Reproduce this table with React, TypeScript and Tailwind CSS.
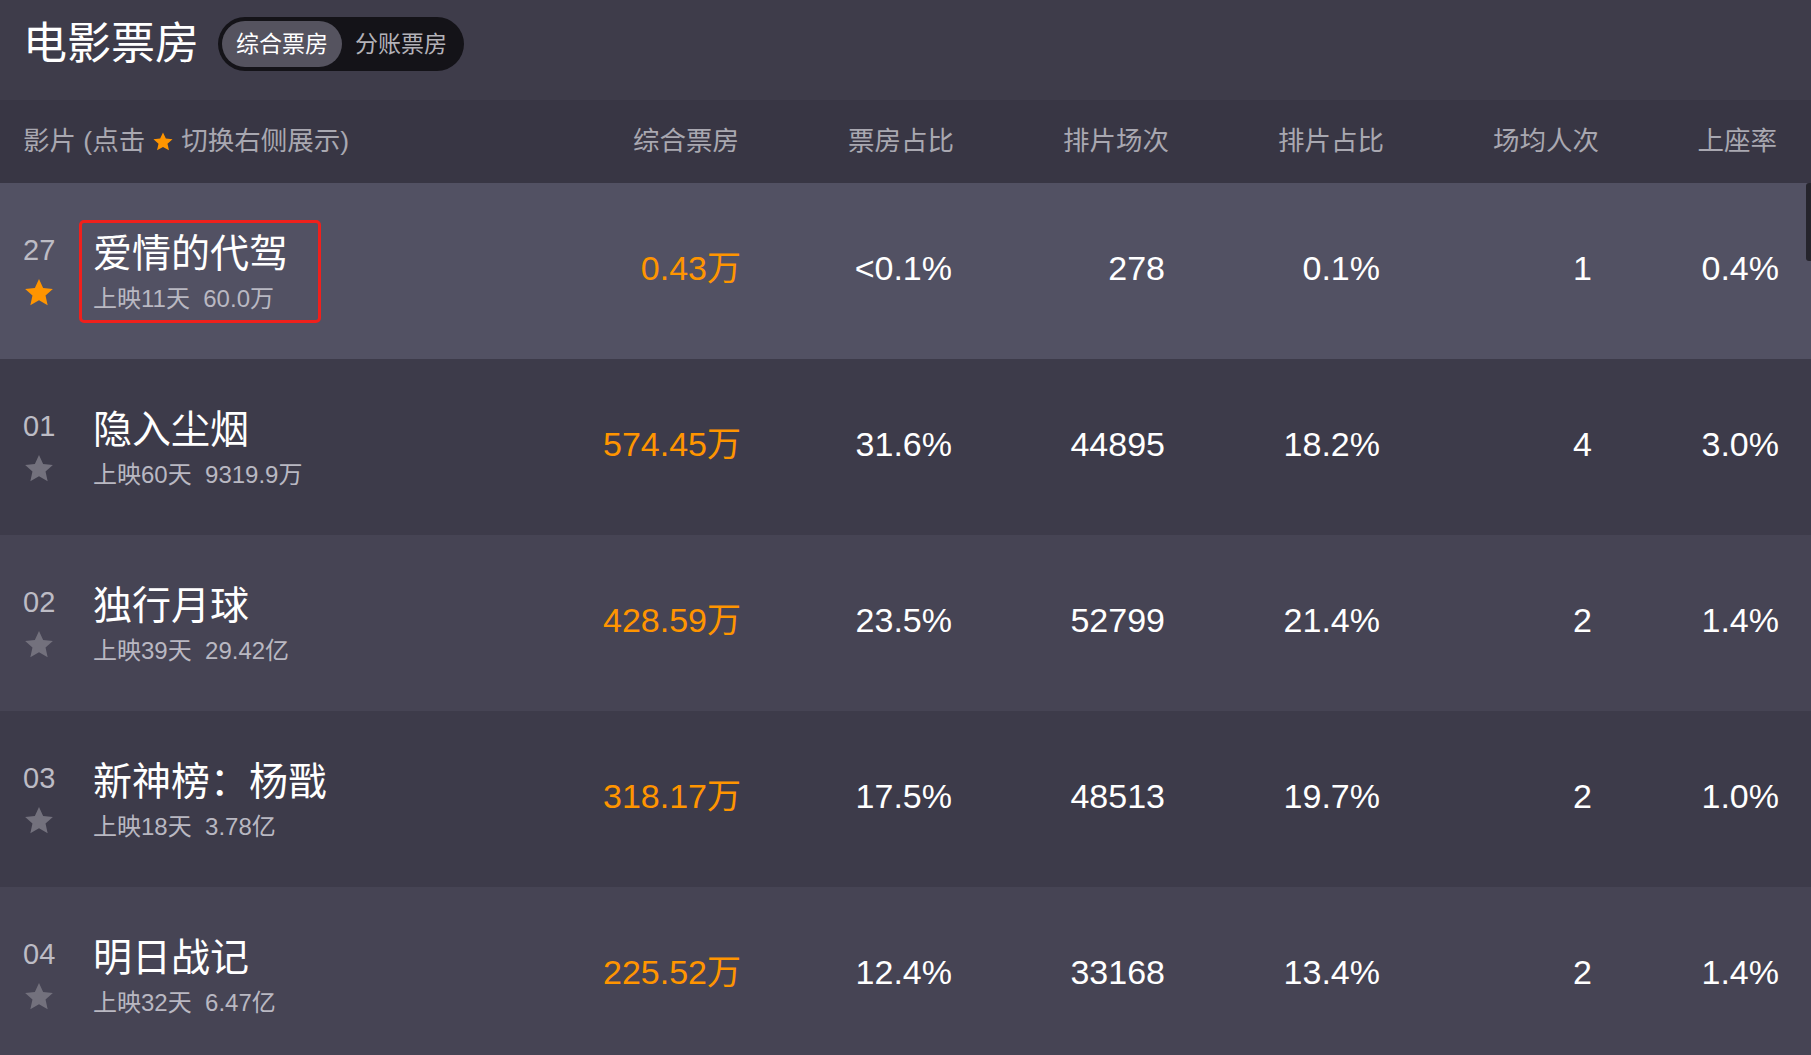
import React from 'react';

type Movie = {
  rank: string;
  name: string;
  days: string;
  total: string;
  boxOffice: string;
  boxRate: string;
  shows: string;
  showRate: string;
  avgSeat: string;
  seatRate: string;
  starred?: boolean;
};

const movies: Movie[] = [
  {
    rank: '27',
    name: '爱情的代驾',
    days: '上映11天',
    total: '60.0万',
    boxOffice: '0.43万',
    boxRate: '<0.1%',
    shows: '278',
    showRate: '0.1%',
    avgSeat: '1',
    seatRate: '0.4%',
    starred: true,
  },
  {
    rank: '01',
    name: '隐入尘烟',
    days: '上映60天',
    total: '9319.9万',
    boxOffice: '574.45万',
    boxRate: '31.6%',
    shows: '44895',
    showRate: '18.2%',
    avgSeat: '4',
    seatRate: '3.0%',
  },
  {
    rank: '02',
    name: '独行月球',
    days: '上映39天',
    total: '29.42亿',
    boxOffice: '428.59万',
    boxRate: '23.5%',
    shows: '52799',
    showRate: '21.4%',
    avgSeat: '2',
    seatRate: '1.4%',
  },
  {
    rank: '03',
    name: '新神榜：杨戬',
    days: '上映18天',
    total: '3.78亿',
    boxOffice: '318.17万',
    boxRate: '17.5%',
    shows: '48513',
    showRate: '19.7%',
    avgSeat: '2',
    seatRate: '1.0%',
  },
  {
    rank: '04',
    name: '明日战记',
    days: '上映32天',
    total: '6.47亿',
    boxOffice: '225.52万',
    boxRate: '12.4%',
    shows: '33168',
    showRate: '13.4%',
    avgSeat: '2',
    seatRate: '1.4%',
  },
];

const columns = ['综合票房', '票房占比', '排片场次', '排片占比', '场均人次', '上座率'];

const rowBg = ['bg-[#525163]', 'bg-[#3d3b4a]', 'bg-[#464454]', 'bg-[#3d3b4a]', 'bg-[#464454]'];

function StarIcon({ className }: { className?: string }) {
  return (
    <svg viewBox="0 0 24 24" className={className} fill="currentColor">
      <polygon points="12,1.5 15.1,8.2 22.4,9 16.9,13.9 18.5,21.1 12,17.4 5.5,21.1 7.1,13.9 1.6,9 8.9,8.2" />
    </svg>
  );
}

const gridCols = 'grid grid-cols-[1fr_215px_215px_215px_215px_215px_178px] pr-[34px]';

export default function App() {
  return (
    <div
      className="relative min-h-screen w-full bg-[#3e3c4a] text-white"
      style={{ fontFamily: '"Liberation Sans", "Noto Sans CJK SC", sans-serif' }}
    >
      {/* top bar */}
      <div className="flex h-[100px] items-start gap-[19px] pl-[23px] pt-[17px]">
        <h1 className="text-[44px] font-normal leading-[54px] text-white">电影票房</h1>
        <div className="flex h-[54px] items-center rounded-full bg-[#141318] p-[4px]">
          <div className="flex h-[46px] w-[120px] items-center justify-center rounded-full bg-[#55535f] text-[23px] text-white">
            综合票房
          </div>
          <div className="flex h-[46px] w-[118px] items-center justify-center text-[23px] text-[#b3b2b8]">
            分账票房
          </div>
        </div>
      </div>

      {/* table header */}
      <div className={`${gridCols} h-[83px] items-center bg-[#383644] text-[26.5px] text-[#a9a8b1]`}>
        <div className="flex items-center pl-[23px]">
          <span>影片 (点击</span>
          <StarIcon className="mx-[7px] h-[22px] w-[22px] text-[#ff9500]" />
          <span>切换右侧展示)</span>
        </div>
        {columns.map((c) => (
          <div key={c} className="text-right">
            {c}
          </div>
        ))}
      </div>

      {/* rows */}
      <div>
        {movies.map((m, i) => (
          <div key={m.rank} className={`${gridCols} h-[176px] items-center ${rowBg[i]}`}>
            <div className="flex items-center pl-[23px]">
              <div className="flex w-[32px] flex-col items-start">
                <span className="text-[29px] leading-[32px] text-[#bdbcc5]">{m.rank}</span>
                <StarIcon
                  className={`mt-[11px] h-[32px] w-[32px] ${m.starred ? 'text-[#ff9500]' : 'text-[#73717d]'}`}
                />
              </div>
              <div
                className={`ml-[24px] rounded-[5px] border-[3px] px-[11px] pb-[6px] pt-[8px] ${
                  m.starred ? 'w-[242px] border-[#f0201c]' : 'border-transparent'
                }`}
              >
                <div className="whitespace-nowrap text-[39px] leading-[46px] text-white">{m.name}</div>
                <div className="mt-[7px] whitespace-nowrap text-[24px] leading-[30px] text-[#b9b8c2]">
                  {m.days}&nbsp;&nbsp;{m.total}
                </div>
              </div>
            </div>
            <div className="-mr-[2px] mb-[5px] text-right text-[34px] text-[#ff9500]">{m.boxOffice}</div>
            <div className="mb-[5px] pr-[2px] text-right text-[34px]">{m.boxRate}</div>
            <div className="mb-[5px] pr-[4px] text-right text-[34px]">{m.shows}</div>
            <div className="mb-[5px] pr-[4px] text-right text-[34px]">{m.showRate}</div>
            <div className="mb-[5px] pr-[7px] text-right text-[34px]">{m.avgSeat}</div>
            <div className="-mr-[2px] mb-[5px] text-right text-[34px]">{m.seatRate}</div>
          </div>
        ))}
      </div>

      {/* scrollbar thumb */}
      <div className="absolute right-0 top-[183px] h-[78px] w-[5px] rounded-l-[3px] bg-[#25242c]" />
    </div>
  );
}
